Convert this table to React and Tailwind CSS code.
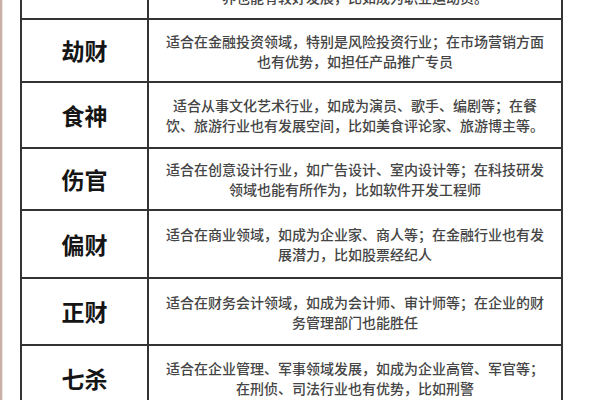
const rows = [
  {
    name: "比肩",
    lines: ["适合从事体育竞技类行业，在体育", "界也能有较好发展，比如成为职业运动员。"],
    h: "h-[64px]",
    faded: true,
  },
  {
    name: "劫财",
    lines: ["适合在金融投资领域，特别是风险投资行业；在市场营销方面", "也有优势，如担任产品推广专员"],
    h: "h-[63px]",
  },
  {
    name: "食神",
    lines: ["适合从事文化艺术行业，如成为演员、歌手、编剧等；在餐", "饮、旅游行业也有发展空间，比如美食评论家、旅游博主等。"],
    h: "h-[66px]",
  },
  {
    name: "伤官",
    lines: ["适合在创意设计行业，如广告设计、室内设计等；在科技研发", "领域也能有所作为，比如软件开发工程师"],
    h: "h-[62px]",
  },
  {
    name: "偏财",
    lines: ["适合在商业领域，如成为企业家、商人等；在金融行业也有发", "展潜力，比如股票经纪人"],
    h: "h-[68px]",
  },
  {
    name: "正财",
    lines: ["适合在财务会计领域，如成为会计师、审计师等；在企业的财", "务管理部门也能胜任"],
    h: "h-[67px]",
  },
  {
    name: "七杀",
    lines: ["适合在企业管理、军事领域发展，如成为企业高管、军官等；", "在刑侦、司法行业也有优势，比如刑警"],
    h: "h-[66px]",
  },
];

const App = () => {
  return (
    <div
      className="w-[600px] h-[400px] overflow-hidden bg-white flex"
      style={{ fontFamily: '"Noto Sans CJK SC", "Noto Sans", sans-serif' }}
    >
      {/* left page edge */}
      <div className="w-[2px] h-full bg-[#c9b1a9]" />
      <div className="w-[1px] h-full bg-[#eee4e1]" />
      <div className="pl-[17px]">
        <table className="w-[543px] border-collapse -mt-[46px] table-fixed">
          <colgroup>
            <col className="w-[127px]" />
            <col />
          </colgroup>
          <tbody>
            {rows.map((row) => (
              <tr key={row.name} className={row.h}>
                <td
                  className={
                    row.faded
                      ? "border-2 border-[#333] text-center align-middle text-[23px] font-bold text-[#e4e4e4]"
                      : "border-2 border-[#333] text-center align-middle text-[23px] font-bold text-[#151515]"
                  }
                >
                  {row.name}
                </td>
                <td className="border-2 border-[#333] text-center align-middle text-[14px] leading-[20px] font-medium text-[#454545]">
                  {row.lines.map((l) => (
                    <div key={l} className="whitespace-nowrap">
                      {l}
                    </div>
                  ))}
                </td>
              </tr>
            ))}
          </tbody>
        </table>
      </div>
    </div>
  );
};

export default App;
